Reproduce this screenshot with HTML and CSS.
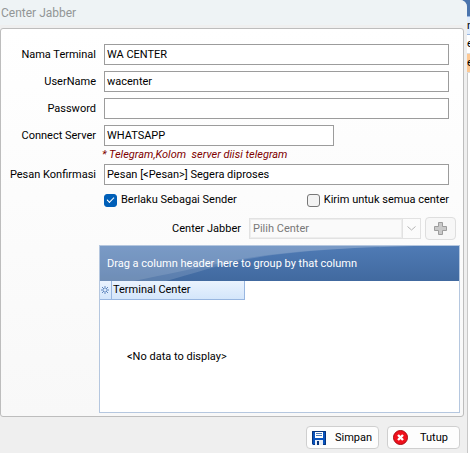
FILE: index.html
```html
<!DOCTYPE html>
<html lang="id">
<head>
    <meta charset="UTF-8">
    <meta name="viewport" content="width=device-width, initial-scale=1.0">
    <title>Center Jabber</title>
    <link rel="stylesheet" href="styles.css">
</head>
<body>

    <div class="dialog">
        <h1 class="title">Center Jabber</h1>

        <form class="panel" id="centerForm">
            <div class="field">
                <label for="terminal">Nama Terminal</label>
                <input type="text" id="terminal" value="WA CENTER">
            </div>
            <div class="field">
                <label for="username">UserName</label>
                <input type="text" id="username" value="wacenter">
            </div>
            <div class="field">
                <label for="password">Password</label>
                <input type="password" id="password">
            </div>
            <div class="field server">
                <label for="server">Connect Server</label>
                <input type="text" id="server" value="WHATSAPP">
            </div>
            <p class="hint">* Telegram,Kolom&nbsp; server diisi telegram</p>
            <div class="field">
                <label for="confirm">Pesan Konfirmasi</label>
                <input type="text" id="confirm" value="Pesan [&lt;Pesan&gt;] Segera diproses">
            </div>

            <div class="checks">
                <label><input type="checkbox" checked>Berlaku Sebagai Sender</label>
                <label><input type="checkbox">Kirim untuk semua center</label>
            </div>

            <div class="picker">
                <label for="center">Center Jabber</label>
                <div class="combo">
                    <select id="center" disabled>
                        <option>Pilih Center</option>
                    </select>
                    <span class="arrow">
                        <svg width="9" height="5" viewBox="0 0 9 5"><path d="M.5 .5l4 3.5 4-3.5" fill="none" stroke="#b4b4b4"/></svg>
                    </span>
                </div>
                <button type="button" class="add" aria-label="Tambah" disabled>
                    <svg width="13" height="13" viewBox="0 0 13 13"><path d="M4.500 .5h4v4h4v4h-4v4h-4v-4h-4v-4h4z" fill="#c9c9c9" stroke="#9d9d9d"/></svg>
                </button>
            </div>

            <div class="grid">
                <div class="group-bar">
                    <svg class="swoosh" viewBox="0 0 359 35" preserveAspectRatio="none">
                        <path d="M0 0H315C230 2 169 7 126 16C97 22 63 29 34 35H0z" fill="#fff" fill-opacity=".12"/>
                        <path d="M0 0H315C230 2 169 7 126 18C100 25 80 31 66 35H0z" fill="#fff" fill-opacity=".14"/>
                    </svg>
                    <span>Drag a column header here to group by that column</span>
                </div>
                <table>
                    <thead>
                        <tr>
                            <th class="mark">
                                <svg width="8" height="8" viewBox="0 0 8 8"><path d="M4 0v8M0 4h8M1 1l6 6M7 1L1 7" stroke="#5f86bd"/><path d="M3 3h2v2H3z" fill="#dce9fa"/></svg>
                            </th>
                            <th>Terminal Center</th>
                        </tr>
                    </thead>
                </table>
                <div class="empty">&lt;No data to display&gt;</div>
            </div>
        </form>

        <div class="footer">
            <button type="submit" form="centerForm">
                <svg width="14" height="14" viewBox="0 0 14 14">
                    <path d="M0 0h14v14H1L0 13z" fill="#0752bd"/>
                    <path d="M.5 .5h13v13h-12l-1-1z" fill="none" stroke="#06347c"/>
                    <path d="M3 1h8v6H3z" fill="#fff"/>
                    <path d="M4 2.500h6M4 4.500h6" stroke="#4778b9"/>
                    <path d="M3 9h8v5H3z" fill="#e8eef7"/>
                    <path d="M5 10h2v4H5z" fill="#06347c"/>
                </svg>
                Simpan
            </button>
            <button type="button">
                <svg width="15" height="15" viewBox="0 0 15 15">
                    <circle cx="7.500" cy="7.500" r="7" fill="#f0101c" stroke="#a80a12"/>
                    <path d="M5 5l5 5M10 5l-5 5" stroke="#fff" stroke-width="2.400"/>
                </svg>
                Tutup
            </button>
        </div>
    </div>

    <!-- edge of the list window behind the dialog -->
    <div class="behind">
        <div class="bar"></div>
        <div class="head">n</div>
        <div class="line">e</div>
        <div class="line selected">e</div>
        <div class="rest"></div>
    </div>

</body>
</html>
```

FILE: styles.css
```css
* {
    box-sizing: border-box;
}

body {
    margin: 0;
    min-height: 100vh;
    display: flex;
    background-color: #4a74ad;
    font-family: Roboto, sans-serif;
    font-size: 11px;
    line-height: 14px;
    color: #000;
}

input, select, button {
    font: inherit;
    color: inherit;
}

svg {
    display: block;
    flex: none;
}

.dialog {
    flex: 1;
    min-width: 0;
    display: flex;
    flex-direction: column;
    background-color: #efefef;
    border-top-right-radius: 7px;
}

.title {
    margin: 0 0 3px;
    padding: 5px 1px 3px;
    font-size: 12px;
    font-weight: normal;
    line-height: 17px;
    color: #929696;
    background-color: #eef3f5;
    border-top-right-radius: 7px;
}

.panel {
    flex: 1;
    display: flex;
    flex-direction: column;
    margin-right: 3px;
    padding: 15px 14px 3px 0;
    border: 1px solid #bdbdbd;
    border-radius: 3px;
    background: linear-gradient(#fff, #f8f8f8);
}

.field {
    display: flex;
    align-items: center;
    gap: 8px;
    margin-bottom: 6px;
}

.field label {
    width: 95px;
    text-align: right;
}

.field input {
    flex: 1;
    min-width: 0;
    height: 21px;
    padding: 0 2px;
    border: 1px solid #9c9c9c;
    background-color: #fff;
}

.server {
    margin-bottom: 0;
}

.server input {
    flex: 0 1 230px;
}

.hint {
    margin: 0;
    padding-left: 101px;
    font-style: italic;
    line-height: 18px;
    color: #800000;
}

.checks {
    display: flex;
    justify-content: space-between;
    margin: 2px 0 10px;
    padding-left: 103px;
}

.checks label {
    display: flex;
    align-items: center;
    gap: 4px;
}

.checks input {
    appearance: none;
    width: 13px;
    height: 13px;
    margin: 0;
    border: 1px solid #777;
    border-radius: 3px;
    background-color: #f3f3f3;
}

.checks input:checked {
    border-color: #005fb8;
    background-color: #005fb8;
    display: grid;
    place-items: center;
}

.checks input:checked::before {
    content: "";
    width: 6px;
    height: 3px;
    margin-bottom: 2px;
    border: solid #fff;
    border-width: 0 0 1px 1px;
    transform: rotate(-45deg);
}

.picker {
    display: flex;
    align-items: center;
    justify-content: flex-end;
    gap: 4px;
    margin: 0 -7px 5px 0;
}

.picker label {
    margin-right: 4px;
}

.combo {
    display: flex;
    width: 172px;
    height: 21px;
    border: 1px solid #e2e2e2;
}

.combo select {
    appearance: none;
    flex: 1;
    min-width: 0;
    padding: 0 2px;
    border: 1px solid #ededed;
    border-radius: 0;
    background-color: #fafafa;
    color: #787878;
    opacity: 1;
}

.arrow {
    width: 18px;
    display: grid;
    place-items: center;
    border-left: 1px solid #e2e2e2;
}

.add {
    width: 31px;
    height: 23px;
    padding: 0;
    display: grid;
    place-items: center;
    border: 1px solid #dedede;
    border-radius: 4px;
    background-color: #f7f7f7;
}

.grid {
    flex: 1;
    display: flex;
    flex-direction: column;
    margin: 0 -11px 0 98px;
    border: 1px solid #b5c7df;
    background-color: #fff;
}

.group-bar {
    position: relative;
    padding: 11px 7px 10px;
    color: #fff;
    background: linear-gradient(#4f7bb5, #41699f);
}

.group-bar span {
    position: relative;
}

.swoosh {
    position: absolute;
    inset: 0;
    width: 100%;
    height: 100%;
}

.grid table {
    align-self: flex-start;
    border-spacing: 0;
}

.grid th {
    width: 133px;
    height: 19px;
    padding: 0 1px;
    border: solid #98b6e0;
    border-width: 0 1px 1px 0;
    background: linear-gradient(#eaf3fe, #d4e6fb);
    font-weight: normal;
    text-align: left;
}

.grid .mark {
    width: 12px;
}

.empty {
    flex: 1;
    padding: 50px 27px 20px;
}

.footer {
    display: flex;
    justify-content: flex-end;
    gap: 8px;
    padding: 9px 7px 4px;
}

.footer button {
    display: flex;
    align-items: center;
    width: 73px;
    height: 23px;
    padding: 0 5px;
    gap: 9px;
    border: 1px solid #cfcfcf;
    border-radius: 4px;
    background-color: #fdfdfd;
    white-space: nowrap;
}

.footer button:last-child {
    gap: 12px;
}

.behind {
    width: 3px;
    display: flex;
    flex-direction: column;
    overflow: hidden;
    line-height: 18px;
}

.bar {
    height: 16px;
    background-color: #4a74ad;
}

.head {
    border-top: 1px solid #98b6e0;
    border-bottom: 1px solid #98b6e0;
    background-color: #e0ecfb;
    line-height: 17px;
}

.line {
    border-bottom: 1px solid #dcdcdc;
    background-color: #fff;
}

.selected {
    background-color: #fdc893;
}

.rest {
    flex: 1;
    border-left: 1px solid #c8c8c8;
    background-color: #fff;
}
```
